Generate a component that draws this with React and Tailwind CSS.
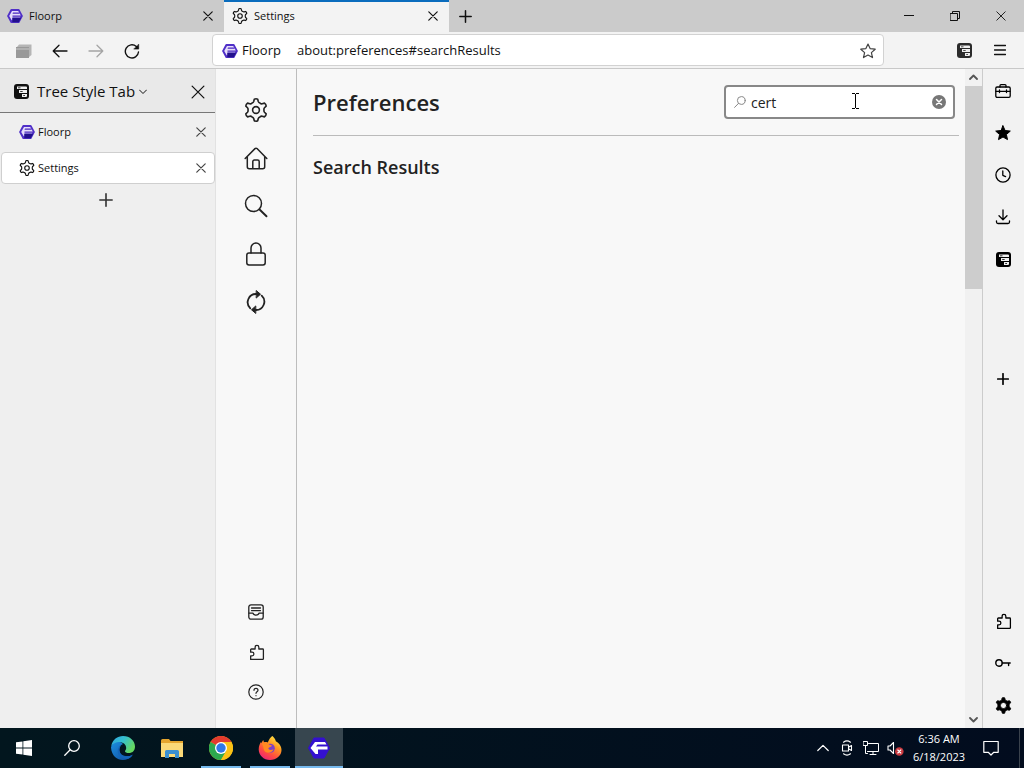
import React from "react";

function Icon({ size = 16, box = 16, sw = 1.2, className = "", children }) {
  return (
    <svg
      width={size}
      height={size}
      viewBox={`0 0 ${box} ${box}`}
      fill="none"
      stroke="currentColor"
      strokeWidth={sw}
      strokeLinecap="round"
      strokeLinejoin="round"
      className={`shrink-0 ${className}`}
      aria-hidden="true"
    >
      {children}
    </svg>
  );
}

const polar = (r, deg) => {
  const a = (deg * Math.PI) / 180;
  return `${(12 + r * Math.sin(a)).toFixed(2)} ${(12 - r * Math.cos(a)).toFixed(2)}`;
};

const gearPath =
  [0, 60, 120, 180, 240, 300]
    .map((t, i) => {
      const start = i === 0 ? "M" : "L";
      return `${start}${polar(10.9, t - 9)} Q${polar(11.6, t)} ${polar(10.9, t + 9)} L${polar(8.8, t + 15)} Q${polar(7.8, t + 20)} ${polar(8, t + 30)} Q${polar(7.8, t + 40)} ${polar(8.8, t + 45)}`;
    })
    .join(" ") + "Z";

const Gear = ({ size, sw = 1.7, className }) => (
  <Icon size={size} box={24} sw={sw} className={className}>
    <path d={gearPath} />
    <circle cx="12" cy="12" r="3.4" />
  </Icon>
);

const GearSolid = () => (
  <Icon size={17} box={24} sw={1.2}>
    <path d={`${gearPath} M16.4 12A4.4 4.4 0 1 0 7.600 12A4.4 4.4 0 1 0 16.4 12Z`} fill="currentColor" fillRule="evenodd" />
  </Icon>
);

const Close = ({ size = 10, sw = 1.2 }) => (
  <Icon size={size} box={10} sw={sw}>
    <path d="M.8.8l8.4 8.4M9.2.8L.8 9.2" />
  </Icon>
);

const Plus = ({ size = 13, sw = 1.5 }) => (
  <Icon size={size} box={13} sw={sw}>
    <path d="M6.5.8v11.4M.8 6.5h11.4" />
  </Icon>
);

const FloorpLogo = ({ size = 16 }) => (
  <svg width={size} height={size} viewBox="0 0 16 16" className="shrink-0" aria-hidden="true">
    <path d="M4.400 1h7.200a1 1 0 0 1 .9.5l3.200 5.900a1.200 1.200 0 0 1 0 1.200l-3.200 5.900a1 1 0 0 1-.9.5H4.400a1 1 0 0 1-.9-.5L.3 8.600a1.200 1.200 0 0 1 0-1.200l3.200-5.900A1 1 0 0 1 4.400 1z" fill="#5030c8" />
    <path d="M5 2.900h6.200l2.600 4.600-.8 2H5.500v2.800H4.700L2.200 8z" fill="#e6defa" />
    <path d="M6 4.600h6.600v1.200H5.500zM5.500 7.500h8.800v1.300H5.500z" fill="#4a28c0" />
    <path d="M5.300 9.800h8.900l-2.500 4.400H5.300z" fill="#22108c" />
  </svg>
);

const TreePanel = ({ size = 15 }) => (
  <svg width={size} height={size} viewBox="0 0 15 15" className="shrink-0" aria-hidden="true">
    <rect width="15" height="15" rx="3" fill="currentColor" />
    <path d="M3 2.500h9a1 1 0 0 1 1 1V5H3zM5 6h8v3H5zM8 10h5v2a1 1 0 0 1-1 1H8z" fill="#f0f0f0" />
    <path d="M4 3.800h2.500M6.200 7.500h2.500M9.200 11.500h1.800" stroke="currentColor" strokeWidth=".8" />
  </svg>
);

const Puzzle = ({ size = 16 }) => (
  <Icon size={size} sw={1.200}>
    <path d="M2.500 14.500v-3.300h1.300a1.700 1.700 0 0 0 0-3.500H2.500V5.400a.7.7 0 0 1 .7-.7h3.500V3a1.700 1.700 0 0 1 3.500 0v1.700h3.600a.7.7 0 0 1 .7.7v8.400a.7.7 0 0 1-.7.7z" />
  </Icon>
);

const navTop = [
  ["General", <Gear size={24} sw={1.6} />],
  [
    "Home",
    <Icon size={24} box={24} sw={1.500}>
      <path d="M1.200 12.500L11 2.600a1.400 1.400 0 0 1 2 0l9.800 9.900M3.300 10.600v10.200a2 2 0 0 0 2 2h13.400a2 2 0 0 0 2-2V10.600M8.800 22.600v-7a1.600 1.600 0 0 1 1.600-1.600h3.200a1.600 1.600 0 0 1 1.600 1.600v7" />
    </Icon>,
  ],
  [
    "Search",
    <Icon size={24} box={24} sw={1.500}>
      <circle cx="9.500" cy="9.500" r="8" />
      <path d="M15.300 15.300l7.200 7" strokeWidth="1.900" />
    </Icon>,
  ],
  [
    "Privacy & Security",
    <Icon size={24} box={24} sw={1.500}>
      <rect x="2.800" y="11" width="18.400" height="12" rx="2.200" />
      <path d="M7 11V6a5 5 0 0 1 10 0v5" />
    </Icon>,
  ],
  [
    "Sync",
    <Icon size={24} box={24} sw={1.800}>
      <path d="M6.300 18.300A8.300 8.300 0 0 1 12.500 4M17.700 5.700A8.300 8.300 0 0 1 11.500 20" />
      <path d="M12.500.8l4 3.400-4 3.600zM11.500 23.200l-4-3.400 4-3.600z" fill="currentColor" strokeWidth="1" />
    </Icon>,
  ],
];

const navBottom = [
  [
    "Sidebar settings",
    <Icon sw={1.300}>
      <rect x=".8" y=".8" width="14.400" height="14.400" rx="2.200" />
      <path d="M3.500 4h9M3.500 6.600h9M1 9.200h4c.5 2.600 5.500 2.600 6 0h4" />
    </Icon>,
  ],
  ["Extensions & Themes", <Puzzle size={17} />],
  [
    "Support",
    <Icon sw={1.200}>
      <circle cx="8" cy="8" r="7.200" />
      <path d="M6 6.300C6 3.600 10 3.700 10 6.200 10 7.800 8 7.700 8 9.300M8 11.500v.2" />
    </Icon>,
  ],
];

const toolsTop = [
  [
    "Toolbox",
    <Icon sw={1.300}>
      <rect x=".8" y="4" width="14.400" height="10.400" rx="1.300" />
      <path d="M5 4V2.600a1 1 0 0 1 1-1h4a1 1 0 0 1 1 1V4M1 8.300h14M4.500 7v2.600M11.500 7v2.600" />
    </Icon>,
  ],
  [
    "Bookmarks",
    <Icon sw={1}>
      <path d="M8 .8l2.100 4.700 5.200.6-3.900 3.400 1.100 5.100L8 12l-4.500 2.600 1.100-5.100L.7 6.100l5.200-.6z" fill="currentColor" />
    </Icon>,
  ],
  [
    "History",
    <Icon sw={1.300}>
      <circle cx="8" cy="8" r="7.100" />
      <path d="M7.800 4v4.300l2.800 1.300" />
    </Icon>,
  ],
  [
    "Downloads",
    <Icon sw={1.300}>
      <path d="M8 1v9.500M4 6.800l4 3.900 4-3.900M1.500 11.800v1.200a1.500 1.500 0 0 0 1.500 1.500h10a1.500 1.500 0 0 0 1.500-1.500v-1.200" />
    </Icon>,
  ],
  ["Tree Style Tab panel", <TreePanel />],
];

const toolsBottom = [
  ["Add-ons", <Puzzle size={17} />],
  [
    "Passwords",
    <Icon sw={1.400}>
      <circle cx="4" cy="8" r="3.200" />
      <path d="M7.200 8h8M13.600 8v2.600" />
    </Icon>,
  ],
  ["Sidebar preferences", <GearSolid />],
];

function IconButton({ label, className = "", children }) {
  return (
    <button type="button" aria-label={label} className={`flex shrink-0 items-center justify-center ${className}`}>
      {children}
    </button>
  );
}

function TitleBar() {
  return (
    <header className="flex h-8 shrink-0 bg-[#cbcbcb]">
      <div className="flex w-56 items-center pl-[7px] pr-[11px]">
        <button type="button" className="flex flex-1 items-center gap-1.5">
          <FloorpLogo />
          Floorp
        </button>
        <IconButton label="Close Floorp tab"><Close /></IconButton>
      </div>
      <div className="flex w-[225px] items-center border-t-2 border-[#0a6cbd] bg-[#f3f3f3] pb-0.5 pl-2 pr-[11px]">
        <button type="button" className="flex flex-1 items-center gap-1.5">
          <Gear size={16} />
          Settings
        </button>
        <IconButton label="Close Settings tab"><Close /></IconButton>
      </div>
      <IconButton label="New tab" className="w-8"><Plus size={13} /></IconButton>
      <div className="ml-auto flex">
        <IconButton label="Minimize" className="w-[46px]">
          <Icon size={10} box={10} sw={1}><path d="M0 4.500h10" /></Icon>
        </IconButton>
        <IconButton label="Restore" className="w-[46px]">
          <Icon size={10} box={10} sw={1}><path d="M.5 2.500h7v7h-7zM2.500 2.500v-2h7v7h-2" /></Icon>
        </IconButton>
        <IconButton label="Close window" className="w-[46px]"><Close sw={0.9} /></IconButton>
      </div>
    </header>
  );
}

function Toolbar() {
  return (
    <div className="flex h-[37px] shrink-0 items-center border-b border-[#c8c8c8] bg-[#f3f3f3] pr-1.5">
      <div className="flex w-[212px] items-center pl-1.5 pt-0.5">
        <IconButton label="Tab manager" className="w-9">
          <svg width="16" height="14" viewBox="0 0 16 14" aria-hidden="true">
            <path d="M3 .5h12.500V11L13 13V3H1z" fill="#b5b5b5" />
            <path d="M0 3h13v11H0z" fill="#999" />
            <path d="M0 5h13" stroke="#c8c8c8" />
          </svg>
        </IconButton>
        <IconButton label="Back" className="w-9">
          <Icon sw={1.300}><path d="M15 8H1.200M7 2.200L1.200 8 7 13.800" /></Icon>
        </IconButton>
        <IconButton label="Forward" className="w-9 text-[#a5a5a5]">
          <Icon sw={1.300}><path d="M1 8h13.800M9 2.200L14.800 8 9 13.800" /></Icon>
        </IconButton>
        <IconButton label="Reload" className="w-9">
          <Icon sw={1.400}>
            <path d="M14.500 9A6.600 6.600 0 1 1 12.300 3.400l1.300 1.300" />
            <path d="M14.700 1.500v4.600h-4.600z" fill="currentColor" strokeWidth=".6" />
          </Icon>
        </IconButton>
      </div>
      <div className="flex h-8 w-[672px] items-center rounded border border-[#d2d2d2] bg-white pl-[9px] pr-[7px] pt-0.5 text-[13px]">
        <button type="button" className="flex w-[75px] items-center gap-1">
          <FloorpLogo />
          Floorp
        </button>
        <input aria-label="Address" defaultValue="about:preferences#searchResults" className="min-w-0 flex-1 bg-transparent outline-none" />
        <IconButton label="Bookmark this page" className="text-[#444]">
          <Icon sw={1.200}>
            <path d="M8 1l2.100 4.600 5.100.6-3.800 3.400 1.100 5L8 12l-4.500 2.600 1.100-5L.8 6.200l5.100-.6z" />
          </Icon>
        </IconButton>
      </div>
      <IconButton label="Toggle tree panel" className="ml-auto w-9 text-[#2b2b2b]"><TreePanel /></IconButton>
      <IconButton label="Menu" className="w-9">
        <Icon size={12} box={12} sw={1.400}><path d="M.5 1.500h11M.5 6h11M.5 10.500h11" /></Icon>
      </IconButton>
    </div>
  );
}

function TreeSidebar() {
  return (
    <aside className="flex w-[216px] shrink-0 flex-col border-r border-[#e2e2e2] bg-[#efefef]">
      <div className="flex h-11 items-center border-b border-[#777] bg-[#e9e9e9] pl-3.5 pr-2.5 pt-0.5">
        <button type="button" className="flex flex-1 items-center text-[15px]">
          <TreePanel />
          <span className="ml-2">Tree Style Tab</span>
          <Icon size={8} box={8} sw={1} className="ml-1"><path d="M.5 2L4 5.500 7.500 2" /></Icon>
        </button>
        <IconButton label="Close sidebar"><Close size={14} sw={0.9} /></IconButton>
      </div>
      <ul className="pt-[3px]">
        <li className="flex h-8 items-center border border-transparent pl-[18px] pr-2">
          <button type="button" className="flex flex-1 items-center gap-[3px]">
            <FloorpLogo />
            Floorp
          </button>
          <IconButton label="Close Floorp" className="text-[#444]"><Close /></IconButton>
        </li>
        <li className="ml-px mt-1 flex h-8 items-center rounded border border-[#cfcfcf] bg-white pl-[17px] pr-2">
          <button type="button" className="flex flex-1 items-center gap-[3px]">
            <Gear size={16} />
            Settings
          </button>
          <IconButton label="Close Settings" className="text-[#444]"><Close /></IconButton>
        </li>
      </ul>
      <IconButton label="Open new tab" className="h-8 pr-1 text-[#333]"><Plus size={14} /></IconButton>
    </aside>
  );
}

function Preferences() {
  return (
    <main className="flex min-w-0 flex-1 bg-[#f8f8f8] text-[#222]">
      <nav aria-label="Categories" className="flex w-[81px] shrink-0 flex-col border-r border-[#bdbdbd] pb-4 pt-[17px]">
        {navTop.map(([label, icon]) => (
          <IconButton key={label} label={label} className="h-12">{icon}</IconButton>
        ))}
        <div className="flex-1" />
        {navBottom.map(([label, icon]) => (
          <IconButton key={label} label={label} className="h-10">{icon}</IconButton>
        ))}
      </nav>
      <section className="min-w-0 flex-1 pl-4 pr-1.5">
        <div className="flex h-[67px] items-center justify-between border-b border-[#bbb] pr-1">
          <h1 className="text-[22px] font-semibold">Preferences</h1>
          <div className="relative">
            <label className="flex h-[34px] w-[231px] items-center rounded border-2 border-[#888] bg-white pl-2 pr-[7px] text-sm">
              <Icon size={12} box={12} sw={1} className="text-[#888]">
                <circle cx="7.300" cy="4.500" r="3.900" />
                <path d="M4.500 7.400L.6 11.400" />
              </Icon>
              <input aria-label="Find in Settings" defaultValue="cert" className="ml-[5px] min-w-0 flex-1 bg-transparent pt-0.5 outline-none" />
              <button type="button" aria-label="Clear search" className="shrink-0">
                <svg width="14" height="14" viewBox="0 0 14 14" aria-hidden="true">
                  <circle cx="7" cy="7" r="7" fill="#777" />
                  <path d="M4.500 4.500l5 5M9.500 4.500l-5 5" stroke="#fff" strokeWidth="1.500" strokeLinecap="round" />
                </svg>
              </button>
            </label>
            <svg width="7" height="16" viewBox="0 0 7 16" className="pointer-events-none absolute right-24 top-2" aria-hidden="true">
              <path d="M0 .5h3M4 .5h3M3.500 1v14M0 15.500h3M4 15.500h3" stroke="#000" />
            </svg>
          </div>
        </div>
        <h2 className="pt-[15px] text-lg font-semibold leading-8">Search Results</h2>
      </section>
      <div className="flex w-[17px] shrink-0 flex-col items-center bg-[#f1f1f1] text-[#555]">
        <IconButton label="Scroll up" className="h-[17px]">
          <Icon size={9} box={9} sw={1.800}><path d="M1 6L4.500 2.500 8 6" /></Icon>
        </IconButton>
        <div className="h-[203px] w-full bg-[#cdcdcd]" />
        <div className="flex-1" />
        <IconButton label="Scroll down" className="h-[17px]">
          <Icon size={9} box={9} sw={1.800}><path d="M1 3l3.500 3.500L8 3" /></Icon>
        </IconButton>
      </div>
    </main>
  );
}

function ToolRail() {
  return (
    <aside className="flex w-[42px] shrink-0 flex-col border-l border-[#ccc] bg-[#f2f2f2] pb-0.5 pr-px pt-px text-black">
      {toolsTop.map(([label, icon]) => (
        <IconButton key={label} label={label} className="h-[42px]">{icon}</IconButton>
      ))}
      <IconButton label="Add panel" className="mt-[78px] h-[42px]"><Plus size={12} sw={1.800} /></IconButton>
      <div className="flex-1" />
      {toolsBottom.map(([label, icon]) => (
        <IconButton key={label} label={label} className="h-[42px]">{icon}</IconButton>
      ))}
    </aside>
  );
}

const EdgeLogo = () => (
  <svg width="24" height="24" viewBox="0 0 24 24" aria-hidden="true">
    <defs>
      <linearGradient id="edgeTop" x1="0" y1="0" x2="1" y2=".5">
        <stop offset="0" stopColor="#2da5e0" />
        <stop offset=".5" stopColor="#35bfd0" />
        <stop offset="1" stopColor="#66d860" />
      </linearGradient>
      <linearGradient id="edgeLow" x1="0" y1="0" x2="1" y2="1">
        <stop offset="0" stopColor="#1c8fe0" />
        <stop offset="1" stopColor="#0f4c9c" />
      </linearGradient>
    </defs>
    <path d="M0 11.500C1.500 5.500 7 3.500 12 8c-3 1.500-4.500 4-3.800 7 .8 4 6 6.500 13.600 4.200C15.500 27 1 25.500 0 11.500z" fill="url(#edgeLow)" />
    <path d="M.2 10C1.500 3.500 6.500 0 12 0c7 0 12 5 12 10.500 0 4.500-3 6.500-6 6.500-2.500 0-4-.8-4-1.800 0-.8 1.200-1.200 1.200-3.200C15.200 5.500 5 3.500.2 10z" fill="url(#edgeTop)" />
    <path d="M10 9.500c-3 4-1 11 5 11 2.500 0 5-.8 6.800-2-.8 1.500-2.300 3-4 4C11 24 6 19 6.800 14c.4-2 1.500-3.600 3.200-4.500z" fill="#1464b8" />
  </svg>
);

const FolderLogo = () => (
  <svg width="22" height="19" viewBox="0 0 22 19" aria-hidden="true">
    <path d="M0 1.500A1.500 1.500 0 0 1 1.500 0H8l1.500 2H22v16H0z" fill="#e5a52e" />
    <path d="M0 4h22v14H0z" fill="#fbd978" />
    <path d="M4 19v-6.500a1.500 1.500 0 0 1 1.500-1.500h11a1.500 1.500 0 0 1 1.500 1.500V19h-4v-4H8v4z" fill="#3b8fd0" />
  </svg>
);

const ChromeLogo = () => (
  <svg width="24" height="24" viewBox="0 0 24 24" aria-hidden="true">
    <circle cx="12" cy="12" r="12" fill="#fbc116" />
    <path d="M12 12L1.600 6A12 12 0 0 1 22.400 6H12z" fill="#e33b2e" />
    <path d="M12 12L1.600 6A12 12 0 0 0 12 24l5.200-9z" fill="#2da94f" />
    <path d="M12 6h10.400A12 12 0 0 1 12 24l5.200-9z" fill="#fbc116" />
    <circle cx="12" cy="12" r="6" fill="#fff" />
    <circle cx="12" cy="12" r="4.700" fill="#3078e8" />
  </svg>
);

const FirefoxLogo = () => (
  <svg width="24" height="24" viewBox="0 0 24 24" aria-hidden="true">
    <defs>
      <linearGradient id="foxBody" x1=".8" y1="0" x2=".2" y2="1">
        <stop offset="0" stopColor="#fff04a" />
        <stop offset=".35" stopColor="#ff9a20" />
        <stop offset=".7" stopColor="#ff4a42" />
        <stop offset="1" stopColor="#e8207c" />
      </linearGradient>
    </defs>
    <path d="M14.500 0c2 2 3 3.500 3.300 5.200C21 7 23.500 10 23.500 14c0 5.500-5 10-11.500 10S.7 19 .7 13.500C.7 9.800 2 7.500 3 6l.2 1.200L5.200 4l.8 2.200c1.300-.3 2.500-.2 3.700.2C11 5 11 2 14.500 0z" fill="url(#foxBody)" />
    <circle cx="12.300" cy="12.300" r="4.500" fill="#7b3fc8" />
    <path d="M4 7.500c3-1.500 6 0 7.500 1.200L14 9.500c-.5 1.500-3 1.500-3.500 2.500-.7 1.500 2 2.800 5 1.200-1.500 5-9.500 4.500-10-.8C5.300 11 5 9.500 4 7.500z" fill="#ff8a22" />
  </svg>
);

const FloorpTaskLogo = () => (
  <svg width="22" height="22" viewBox="0 0 22 22" aria-hidden="true">
    <path d="M6 1h10l5.500 10L16 21H6L.5 11z" fill="#3410d0" stroke="#3410d0" strokeLinejoin="round" />
    <path d="M7 5h10l1.500 2.500H9.500L8 9.500h11.500v3H10V17H7.500L2.500 11z" fill="#fff" />
  </svg>
);

const taskApps = [
  ["Edge", <EdgeLogo />, "none"],
  ["File Explorer", <FolderLogo />, "none"],
  ["Chrome", <ChromeLogo />, "open"],
  ["Firefox", <FirefoxLogo />, "open"],
  ["Floorp window", <FloorpTaskLogo />, "active"],
];

function Taskbar() {
  return (
    <footer className="flex h-10 shrink-0 bg-linear-to-r from-[#02161e] to-[#020c1e] text-white">
      <IconButton label="Start" className="w-12">
        <svg width="16" height="16" viewBox="0 0 16 16" fill="#fff" aria-hidden="true">
          <path d="M0 2.300L6.500 1.400V7.600H0zM7.300 1.300L16 0V7.600H7.300zM0 8.400H6.500V14.600L0 13.700zM7.300 8.400H16V16L7.300 14.700z" />
        </svg>
      </IconButton>
      <IconButton label="Search" className="mr-[3px] w-12">
        <Icon sw={1.300}>
          <circle cx="10" cy="6" r="5.300" />
          <path d="M6.200 9.800L.8 15.200" />
        </Icon>
      </IconButton>
      <div className="flex gap-px">
        {taskApps.map(([label, icon, state]) => (
          <button
            key={label}
            type="button"
            aria-label={label}
            className={`flex w-12 flex-col items-center ${state === "active" ? "bg-[#37464f]" : ""}`}
          >
            <span className="flex flex-1 items-center pt-0.5">{icon}</span>
            <span className={`h-0.5 ${state === "none" ? "w-0" : state === "open" ? "w-10 bg-[#76b9ed]" : "w-full bg-[#76b9ed]"}`} />
          </button>
        ))}
      </div>
      <div className="ml-auto flex items-center">
        <IconButton label="Show hidden icons" className="w-6">
          <Icon size={12} box={12} sw={1.200}><path d="M.8 8.500L6 3.300l5.200 5.200" /></Icon>
        </IconButton>
        <IconButton label="Meet Now" className="w-6">
          <Icon sw={1.100}>
            <path d="M3.500 5h6v6h-6zM9.500 7.200l3-1.700v5l-3-1.700M4.500 2.200c2-1.500 5-1.500 7 0M4.500 13.800c2 1.500 5 1.500 7 0" />
          </Icon>
        </IconButton>
        <IconButton label="Network" className="w-6">
          <Icon sw={1}>
            <path d="M5.500 3.500h10v8H4.500M10 11.500v3M7 14.500h6M.5 1.500h4v4h-4zM2.500 5.500v8h2" />
          </Icon>
        </IconButton>
        <IconButton label="Volume muted" className="w-6">
          <Icon size={17} box={17} sw={1.100}>
            <path d="M1 6h2l3.500-3.500v11L3 10H1z" />
            <circle cx="12.300" cy="11.500" r="4.300" fill="#c93a40" stroke="none" />
            <path d="M10.800 10l3 3M13.800 10l-3 3" />
          </Icon>
        </IconButton>
        <button type="button" className="w-16 text-center text-[11px] leading-[18px]">
          <span className="block">6:36 AM</span>
          <span className="block">6/18/2023</span>
        </button>
        <IconButton label="Notifications" className="w-10">
          <Icon sw={1.200}><path d="M.8 1.500h14.400v10.800h-4.400L8 15l-2.800-2.700H.8z" /></Icon>
        </IconButton>
        <div className="ml-2 mr-1 h-10 w-px bg-[#3a424c]" />
      </div>
    </footer>
  );
}

export default function App() {
  return (
    <div className="flex h-screen flex-col overflow-hidden bg-[#f3f3f3] font-['Open_Sans',sans-serif] text-[11px] text-[#111]">
      <TitleBar />
      <Toolbar />
      <div className="flex min-h-0 flex-1">
        <TreeSidebar />
        <Preferences />
        <ToolRail />
      </div>
      <Taskbar />
    </div>
  );
}
